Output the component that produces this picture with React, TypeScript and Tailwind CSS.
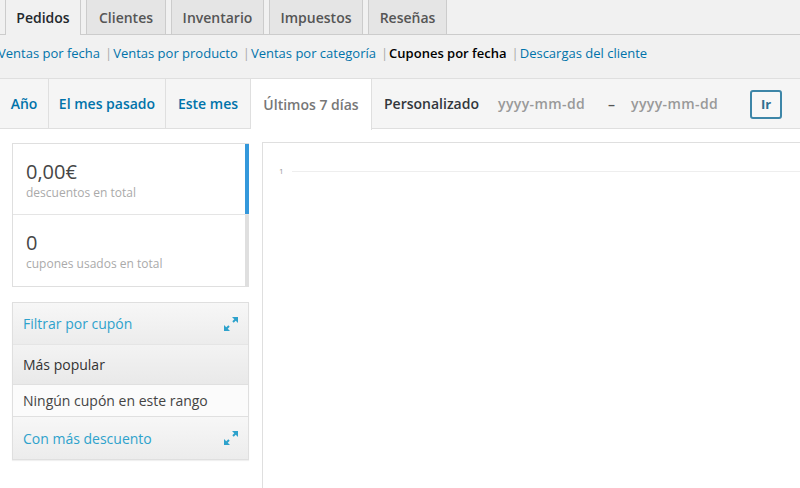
import React from "react";

const ExpandIcon = () => (
  <svg width="14" height="14" viewBox="0 0 14 14" className="shrink-0">
    <polygon points="14,0 14,6 8,0" fill="#2ea2cc" />
    <line x1="12" y1="2" x2="9" y2="5" stroke="#2ea2cc" strokeWidth="2" />
    <polygon points="0,14 0,8 6,14" fill="#2ea2cc" />
    <line x1="2" y1="12" x2="5" y2="9" stroke="#2ea2cc" strokeWidth="2" />
  </svg>
);

const Sep = () => <span className="text-[#aaa] ml-[5px] mr-[1px]">|</span>;

export default function App() {
  const topTabs = ["Clientes", "Inventario", "Impuestos", "Reseñas"];
  return (
    <div
      className="w-[800px] h-[488px] overflow-hidden bg-[#f1f1f1] text-[#444]"
      style={{ fontFamily: '"Open Sans", "Noto Sans", sans-serif' }}
    >
      {/* Top nav tabs */}
      <div className="flex h-[35px] border-b border-[#cccccc] pl-[5px] gap-[5px]">
        <div className="h-[35px] px-[12px] flex items-center border-x border-[#cccccc] bg-[#f1f1f1] text-[14px] font-semibold text-[#23282d] mb-[-1px] w-[76px] justify-center">
          Pedidos
        </div>
        {topTabs.map((t, i) => (
          <div
            key={t}
            className={`h-[34px] flex items-center justify-center border-x border-[#cccccc] bg-[#e5e5e5] text-[14px] font-semibold text-[#555] ${
              ["w-[80px]", "w-[93px]", "w-[94px]", "w-[79px]"][i]
            }`}
          >
            {t}
          </div>
        ))}
      </div>

      {/* Subsubsub */}
      <div className="h-[36px] flex items-center text-[13px] text-[#666] ml-[-2px] pt-[1px]">
        <span className="text-[#0073aa]">Ventas por fecha</span>
        <Sep />
        <span className="text-[#0073aa]">Ventas por producto</span>
        <Sep />
        <span className="text-[#0073aa]">Ventas por categoría</span>
        <Sep />
        <span className="text-black font-semibold">Cupones por fecha</span>
        <Sep />
        <span className="text-[#0073aa]">Descargas del cliente</span>
      </div>

      {/* Range bar */}
      <div className="mt-[7px] h-[51px] flex border-t border-b border-[#dfdfdf] bg-[#f5f5f5]">
        <div className="w-[49px] flex items-center justify-center border-r border-[#dfdfdf] text-[14px] font-semibold text-[#0073aa]">
          Año
        </div>
        <div className="w-[117px] flex items-center justify-center border-r border-[#dfdfdf] text-[14px] font-semibold text-[#0073aa]">
          El mes pasado
        </div>
        <div className="w-[85px] flex items-center justify-center border-r border-[#dfdfdf] text-[14px] font-semibold text-[#0073aa]">
          Este mes
        </div>
        <div className="w-[121px] h-[51px] flex items-center justify-center border-r border-[#dfdfdf] bg-white mb-[-1px] text-[14px] font-semibold text-[#777]">
          Últimos 7 días
        </div>
        <div className="flex items-center pl-[12px] text-[14px] font-semibold">
          <span className="text-[#32373c]">Personalizado</span>
          <span className="ml-[19px] w-[88px] text-[#999] tracking-[0.4px]">yyyy-mm-dd</span>
          <span className="ml-[22px] w-[8px] text-[#555]">–</span>
          <span className="ml-[15px] w-[88px] text-[#999] tracking-[0.4px]">yyyy-mm-dd</span>
          <span className="ml-[31px] w-[32px] h-[29px] mt-[2px] flex items-center justify-center border-2 border-[#3d86a8] rounded-[3px] bg-[#f7f7f7] text-[#2f6f8f] text-[13px] font-bold">
            Ir
          </span>
        </div>
      </div>

      {/* Main */}
      <div className="flex bg-white h-[400px]">
        <div className="w-[250px] pl-[12px] pt-[14px] shrink-0">
          <div className="w-[237px] border-l border-t border-b border-[#dfdfdf] bg-white">
            <div className="h-[71px] flex border-b border-[#e5e5e5]">
              <div className="flex-1 pl-[13px] pt-[15px]">
                <div className="text-[20px] leading-[26px] text-[#464646]">0,00€</div>
                <div className="text-[12px] leading-[16px] text-[#aaa]">descuentos en total</div>
              </div>
              <div className="w-[4px] bg-[#3498db]" />
            </div>
            <div className="h-[71px] flex">
              <div className="flex-1 pl-[13px] pt-[15px]">
                <div className="text-[20px] leading-[26px] text-[#464646]">0</div>
                <div className="text-[12px] leading-[16px] text-[#aaa]">cupones usados en total</div>
              </div>
              <div className="w-[4px] bg-[#dfdfdf]" />
            </div>
          </div>

          <div className="mt-[15px] w-[237px] border border-[#dfdfdf] shadow-[0_1px_1px_rgba(0,0,0,0.06)]">
            <div className="h-[42px] flex items-center justify-between pl-[10px] pr-[10px] bg-gradient-to-b from-[#f7f7f7] to-[#ececec] border-b border-[#e5e5e5] text-[14px] text-[#2ea2cc]">
              <span>Filtrar por cupón</span>
              <ExpandIcon />
            </div>
            <div className="h-[40px] flex items-center pl-[10px] bg-gradient-to-b from-[#f3f3f3] to-[#e9e9e9] border-b border-[#e0e0e0] text-[14px] text-[#333]">
              Más popular
            </div>
            <div className="h-[32px] flex items-center pl-[10px] bg-[#fbfbfb] border-b border-[#e0e0e0] text-[14px] text-[#444]">
              Ningún cupón en este rango
            </div>
            <div className="h-[42px] flex items-center justify-between pl-[10px] pr-[10px] bg-gradient-to-b from-[#f7f7f7] to-[#ececec] text-[14px] text-[#2ea2cc]">
              <span>Con más descuento</span>
              <ExpandIcon />
            </div>
          </div>
        </div>

        <div className="flex-1 ml-[12px] mt-[13px] border-l border-t border-[#dfdfdf] bg-white">
          <div className="flex items-center pl-[16px] pt-[24px]">
            <span className="text-[8px] leading-[8px] text-[#999]">1</span>
            <div className="flex-1 ml-[8px] h-px bg-[#eeeeee]" />
          </div>
        </div>
      </div>
    </div>
  );
}
